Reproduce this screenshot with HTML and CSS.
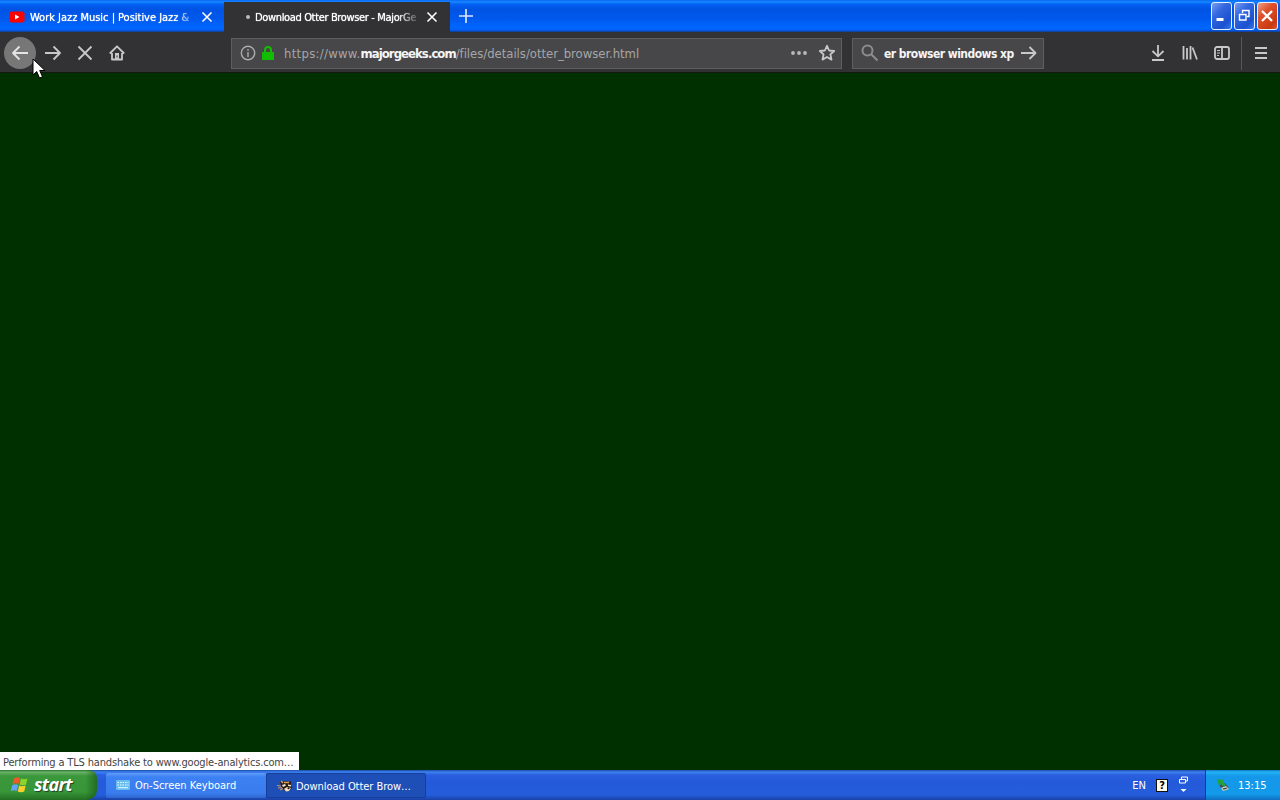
FILE: index.html
```html
<!DOCTYPE html>
<html lang="en">
<head>
    <meta charset="utf-8">
    <title>Download Otter Browser - MajorGeeks</title>
    <link rel="stylesheet" href="styles.css">
</head>
<body>
    <div class="tabbar">
        <div class="tab">
            <svg class="fav" width="16" height="12" viewBox="0 0 16 12"><rect x="0.5" y="0.5" width="15" height="11" rx="2.5" fill="#f00"/><path d="M6 3.500l4.500 2.500L6 8.500z" fill="#fff"/></svg>
            <span class="tab-text t1">Work Jazz Music | Positive Jazz &amp;</span>
            <svg class="close" width="12" height="12" viewBox="0 0 12 12"><path d="M1.5 1.5l9 9M10.5 1.5l-9 9"/></svg>
        </div>
        <div class="tab active">
            <i class="dot"></i>
            <span class="tab-text t2">Download Otter Browser - MajorGe</span>
            <svg class="close" width="12" height="12" viewBox="0 0 12 12"><path d="M1.5 1.5l9 9M10.5 1.5l-9 9"/></svg>
        </div>
        <svg class="plus" width="16" height="16" viewBox="0 0 16 16"><path d="M8 1v14M1 8h14"/></svg>
        <div class="winbtns">
            <div class="wb"><svg width="20" height="26" viewBox="0 0 20 26"><path d="M4.500 16.500h7" stroke-width="3"/></svg></div>
            <div class="wb"><svg width="20" height="26" viewBox="0 0 20 26"><path d="M7.500 10V7.500h6.500v6h-2M4.500 11.500h6.500v5.500h-6.500zM4 11.500h7.500" stroke-width="1.4"/></svg></div>
            <div class="wb red"><svg width="18" height="26" viewBox="0 0 18 26"><path d="M4 8l10 10M14 8L4 18" stroke-width="2.300"/></svg></div>
        </div>
    </div>

    <div class="navbar">
        <div class="back"><svg class="ico" width="18" height="16" viewBox="0 0 18 16"><path d="M17 8H2M8.500 1.500L2 8l6.500 6.500"/></svg></div>
        <svg class="ico fwd" width="18" height="16" viewBox="0 0 18 16"><path d="M1 8h15M9.500 1.500L16 8l-6.500 6.500"/></svg>
        <svg class="ico stop" width="16" height="16" viewBox="0 0 16 16"><path d="M1.500 1.500l13 13M14.500 1.500l-13 13"/></svg>
        <svg class="ico home" width="16" height="16" viewBox="0 0 16 16"><path d="M.8 8.500L8 1.300l7.200 7.200M3 8v6.500h10V8"/><path d="M6 15V8h4v7z" fill="#c8c8ca" stroke="none"/><path d="M8 10.500v2" stroke="#38383a" stroke-width="1"/></svg>
        <div class="urlbar">
            <svg class="info" width="16" height="16" viewBox="0 0 16 16"><circle cx="8" cy="8" r="6.700"/><path d="M8 7v5M8 4v1.700"/></svg>
            <svg class="lock" width="14" height="16" viewBox="0 0 14 16"><path d="M4 8V5a3 3 0 0 1 6 0v3" fill="none" stroke="#12bc00" stroke-width="2"/><rect x="1" y="7" width="12" height="8" rx="1" fill="#12bc00"/></svg>
            <div class="url"><span class="u1">https://www.</span><b>majorgeeks.com</b><span class="u2">/files/details/otter_browser.html</span></div>
            <svg class="dots" width="18" height="6" viewBox="0 0 18 6"><circle cx="3" cy="3" r="1.900"/><circle cx="9" cy="3" r="1.900"/><circle cx="15" cy="3" r="1.900"/></svg>
            <svg class="ico star" width="18" height="18" viewBox="0 0 18 18"><path d="M9 1.800l2.100 4.700 5.100.5-3.800 3.400 1.100 5.200L9 13l-4.500 2.600 1.100-5.200L1.800 7l5.100-.5z"/></svg>
        </div>
        <div class="searchbar">
            <svg class="mag" width="18" height="18" viewBox="0 0 18 18"><circle cx="6.500" cy="6.500" r="5"/><path d="M10 10l6.500 6.500"/></svg>
            <div class="query"><span>er browser windows xp</span></div>
            <svg class="ico" width="16" height="16" viewBox="0 0 16 16"><path d="M0 8h14.500M8.500 2l6 6-6 6"/></svg>
        </div>
        <div class="tools">
            <svg class="ico" width="16" height="16" viewBox="0 0 16 16"><path d="M8 0v11M2.500 6L8 11.300 13.500 6M2 15h12"/></svg>
            <svg class="ico" width="16" height="16" viewBox="0 0 16 16"><path d="M1.500 1v13.500M5 3v11.500M8.500 1v13.500M10.500 2.500l4.500 12"/></svg>
            <svg class="ico" width="16" height="16" viewBox="0 0 16 16"><rect x="1" y="2" width="14" height="12" rx="2"/><path d="M8 2v12"/><path d="M3 5.500h3M3 8h3M3 10.500h2" stroke-width="1"/></svg>
            <i class="sep"></i>
            <svg class="ico" width="14" height="14" viewBox="0 0 14 14"><path d="M1 2h12M1 7h12M1 12h12"/></svg>
        </div>
    </div>

    <div class="page">
        <div class="status"><span>Performing a TLS handshake to www.google-analytics.com…</span></div>
    </div>

    <div class="taskbar">
        <div class="start">
            <svg width="19" height="18" viewBox="0 0 19 18">
                <path d="M4 2.500Q7 .5 10 2L8.500 8Q5.500 6.500 2.500 8z" fill="#f0582a"/>
                <path d="M11 2.500q3 1.500 6.500 0L16 8.500q-3 1.500-6.500 0z" fill="#8ed22d"/>
                <path d="M2.200 9.200q3-1.700 6-.2l-1.500 6q-3-1.500-6 .2z" fill="#64a4f5"/>
                <path d="M9.200 9.600q3 1.400 6.500 0l-1.500 6q-3.500 1.400-6.500 0z" fill="#fbd02d"/>
            </svg>
            <span>start</span>
        </div>
        <div class="task">
            <svg width="16" height="14" viewBox="0 0 16 14"><rect x="1" y="1" width="14" height="10" rx="1" fill="#67bdf0"/><path d="M2.500 3.500h11M2.500 6h11" stroke="#e8faff" stroke-dasharray="1.500 1"/><path d="M3 8.700h10" stroke="#e8faff"/></svg>
            <span class="k1">On-Screen Keyboard</span>
        </div>
        <div class="task pressed">
            <svg width="16" height="14" viewBox="0 0 16 14">
                <path d="M3 2l3 1q3-2 6 0l2-1v4l1 3-3 3H8L4 8z" fill="#2b1d15"/>
                <path d="M4 2l2 2M7 3.500h5" stroke="#d8a15c" stroke-width="1.300"/>
                <path d="M5 6l3-1 1 1.500L6 8zM11 5.500l3 .5v1.500l-3-.5z" fill="#f2e6d3"/>
                <path d="M7 10l3-2 4 1-2 3-3 .5z" fill="#f2dfc3"/>
                <circle cx="11.500" cy="9.200" r="1" fill="#15100d"/>
                <path d="M0 6.500l4 .5M1 9l4-.5M3 11l3-1.500" stroke="#c99562" stroke-width="1.200"/>
            </svg>
            <span class="k2">Download Otter Brow…</span>
        </div>
        <div class="lang">
            <span>EN</span>
            <div class="help"><b>?</b></div>
            <svg class="restore" width="11" height="18" viewBox="0 0 11 18"><path d="M3.500 3.500V1h6v4H7.500M1.500 3.500h6v3.500h-6z" fill="none" stroke="#fff"/><path d="M2.500 13h6l-3 3z" fill="#fff"/></svg>
        </div>
        <div class="tray">
            <svg width="14" height="14" viewBox="0 0 14 14"><path d="M3 7l6-2 4 5-6 3z" fill="#46525a"/><path d="M5 10l5-2 3 3-6 2z" fill="#d5d9c8"/><path d="M6.500 10.500l4-1 1 1-4 1.200z" fill="#39434a"/><path d="M1 1l7 1-1 2 3 3-2 2-3-3-2 2z" fill="#21a33a"/></svg>
            <span>13:15</span>
        </div>
    </div>

    <svg class="cursor" width="14" height="22" viewBox="0 0 14 22"><path d="M1 1v16l3.700-3.500L7.500 20l3-1.200-2.800-6.300H13z" fill="#fff" stroke="#000"/></svg>
</body>
</html>
```
FILE: styles.css
```css
* { box-sizing: border-box; }
html, body { height: 100%; }
body { margin: 0; display: flex; flex-direction: column; overflow: hidden; font: 11px "DejaVu Sans Condensed", "DejaVu Sans", sans-serif; font-stretch: condensed; }
svg { display: block; flex: none; fill: none; }
span, b { white-space: nowrap; }

.tabbar { display: flex; height: 32px; flex: none; color: #fff; background: linear-gradient(#0b66f5 0, #168aff 2px, #0562f5 4px, #0054e3 9px, #0058ec 18px, #0066ff 27px, #0060f5 30px, #153a8a 32px); }
.tab { display: flex; align-items: center; width: 224px; padding: 2px 11px 0 9px; }
.tab.active { width: 226px; margin-top: 2px; padding: 0 12px 0 22px; background: #323234; }
.tab-text { text-shadow: 0 0 1px #fff; }
.t1 { width: 165px; margin: 0 auto 0 5px; letter-spacing: -0.02px; -webkit-mask-image: linear-gradient(90deg, #000 145px, transparent 168px); }
.t2 { width: 168px; margin: 0 auto 0 5px; letter-spacing: -0.35px; -webkit-mask-image: linear-gradient(90deg, #000 143px, transparent 166px); }
.dot { width: 4px; height: 4px; border-radius: 2px; background: #bbb; }
.close { stroke: #fff; stroke-width: 1.6; }
.plus { margin: 8px 0 0 8px; stroke: #d8e7ff; stroke-width: 1.7; }
.winbtns { display: flex; gap: 2px; margin: 2px 2px 0 auto; }
.wb { width: 21px; height: 28px; border: 1px solid #e8f0ff; border-radius: 3px; background: linear-gradient(135deg, #7b9cf0, #3267df 35%, #1b50cf 75%, #3978f0); }
.wb svg { stroke: #fff; }
.wb.red { background: linear-gradient(135deg, #eea083, #df512c 35%, #c93910 80%, #dc562f); }

.navbar { display: flex; align-items: center; height: 41px; flex: none; padding: 2px 12px 0 4px; background: #323234; border-bottom: 1px solid #141914; }
.ico { stroke: #c8c8ca; stroke-width: 1.8; stroke-linejoin: round; }
.back { display: flex; align-items: center; justify-content: center; width: 32px; height: 32px; border-radius: 50%; background: #777; }
.back .ico { stroke: #e4e4e4; }
.fwd { margin-left: 8px; }
.stop { margin-left: 15px; }
.home { margin-left: 16px; }
.urlbar, .searchbar { display: flex; align-items: center; height: 31px; border: 1px solid #5e5e60; background: #474749; }
.urlbar { width: 611px; margin-left: 106px; padding: 0 5px 0 8px; }
.info { stroke: #aaa; stroke-width: 1.4; }
.lock { margin-left: 5px; }
.url { display: flex; margin: 0 auto 0 9px; font-size: 13px; color: #a6a6a8; }
.url b { color: #f5f5f5; letter-spacing: -0.95px; }
.u1 { letter-spacing: 0.28px; }
.u2 { letter-spacing: -0.04px; }
.dots { fill: #b9b9bb; margin-right: 10px; }
.searchbar { width: 192px; margin-left: 10px; padding: 0 6px 0 8px; }
.mag { stroke: #8d8d8f; stroke-width: 2; }
.query { width: 131px; margin: 0 auto 0 5px; padding-top: 1px; font-size: 12px; font-weight: bold; color: #f5f5f5; }
.query span { letter-spacing: -0.54px; }
.tools { display: flex; align-items: center; gap: 16px; margin: 0 0 0 auto; }
.sep { width: 1px; height: 33px; margin: 0 -4px 0 -5px; background: #58585a; }

.page { display: flex; align-items: flex-end; flex: 1; background: #003000; }
.status { width: 299px; height: 18px; padding: 4px 0 0 3px; background: #fff; color: #444; line-height: 14px; letter-spacing: -0.16px; }

.taskbar { display: flex; height: 30px; flex: none; color: #fff; background: linear-gradient(#1d49a8 0, #3c81f0 2px, #2a60df 5px, #245ad9 12px, #245ddb 25px, #1941a5 30px); }
.start { display: flex; align-items: center; width: 97px; padding: 0 0 1px 10px; border-radius: 0 8px 10px 0; background: linear-gradient(90deg, transparent 88%, rgba(20, 80, 20, .6)), linear-gradient(#2b702b 0, #68b268 2px, #3b973b 6px, #379637 22px, #236d23 30px); }
.start span { margin: -1px 0 0 5px; font: italic bold 18px "Open Sans", sans-serif; letter-spacing: -0.7px; text-shadow: 1px 1px 1px #204020; }
.task { display: flex; align-items: center; gap: 4px; width: 160px; height: 25px; margin: 3px 0 0 9px; padding: 0 0 0 9px; border-radius: 2px; background: linear-gradient(#629cf8 0, #3c81f3 4px, #3a7cee 20px, #2f66cf 25px); }
.task + .task { margin-left: 0; }
.task.pressed { padding-top: 1px; padding-left: 10px; gap: 3px; background: #1e4fb7; border: 1px solid #183f97; }
.k2 { letter-spacing: -0.05px; }
.lang { display: flex; align-items: center; margin-left: auto; padding-right: 16px; }
.help { width: 12px; height: 13px; margin-left: 10px; border: 1px solid #111; background: #fffde8; color: #000; text-align: center; line-height: 11px; }
.restore { margin-left: 10px; }
.tray { display: flex; align-items: center; width: 75px; padding-left: 10px; border-left: 1px solid #123d91; background: linear-gradient(#1670c5 0, #21b4f4 2px, #1597ea 6px, #139ae9 24px, #0f70c4 30px); }
.tray span { margin-left: 8px; }

.cursor { position: absolute; left: 32px; top: 58px; }
```
